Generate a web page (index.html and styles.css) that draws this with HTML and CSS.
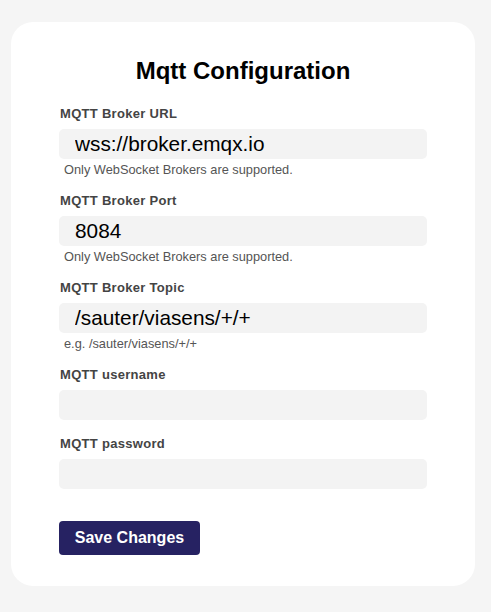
FILE: index.html
```html
<!DOCTYPE html>
<html lang="en">
<head>
<meta charset="utf-8">
<title>Mqtt Configuration</title>
<link rel="stylesheet" href="styles.css">
</head>
<body>
<main class="card">
  <h1 class="title">Mqtt Configuration</h1>
  <form class="form">
    <div class="field">
      <label class="label" for="url">MQTT Broker URL</label>
      <input class="input" id="url" type="text" value="wss://broker.emqx.io">
      <p class="help">Only WebSocket Brokers are supported.</p>
    </div>
    <div class="field">
      <label class="label" for="port">MQTT Broker Port</label>
      <input class="input" id="port" type="text" value="8084">
      <p class="help">Only WebSocket Brokers are supported.</p>
    </div>
    <div class="field">
      <label class="label" for="topic">MQTT Broker Topic</label>
      <input class="input" id="topic" type="text" value="/sauter/viasens/+/+">
      <p class="help">e.g. /sauter/viasens/+/+</p>
    </div>
    <div class="field">
      <label class="label" for="user">MQTT username</label>
      <input class="input" id="user" type="text" value="">
    </div>
    <div class="field">
      <label class="label" for="pass">MQTT password</label>
      <input class="input" id="pass" type="password" value="">
    </div>
    <button class="btn" type="button">Save Changes</button>
  </form>
</main>
</body>
</html>
```
FILE: styles.css
```css
* { box-sizing: border-box; }
html, body { margin: 0; padding: 0; }
body {
  background: #f5f5f5;
  font-family: "Liberation Sans", Arial, sans-serif;
  padding: 22px 16px 26px 11px;
}
.card {
  width: 464px;
  background: #ffffff;
  border-radius: 22px;
  padding: 35px 48px 31px 48px;
}
.title {
  margin: 0 0 20px 0;
  font-size: 24px;
  line-height: 28px;
  font-weight: 700;
  text-align: center;
  color: #000;
}
.form { display: flex; flex-direction: column; }
.field { display: flex; flex-direction: column; margin-bottom: 15px; }
.label {
  font-size: 13px;
  line-height: 16px;
  font-weight: 700;
  color: #444;
  letter-spacing: 0.3px;
  margin: 1px 0 7px 1px;
}
.input {
  height: 30px;
  width: 100%;
  border: none;
  border-radius: 5px;
  background: #f3f3f3;
  padding: 0 16px;
  font-family: "Liberation Sans", Arial, sans-serif;
  font-size: 20.8px;
  color: #000;
  outline: none;
}
.help {
  margin: 4px 0 0 5px;
  font-size: 12.8px;
  line-height: 14px;
  color: #555;
}
.btn {
  align-self: flex-start;
  margin-top: 17px;
  height: 34px;
  width: 141px;
  border: none;
  border-radius: 4px;
  background: #262262;
  color: #fff;
  font-family: "Liberation Sans", Arial, sans-serif;
  font-size: 16px;
  font-weight: 700;
  padding: 0;
}
```
